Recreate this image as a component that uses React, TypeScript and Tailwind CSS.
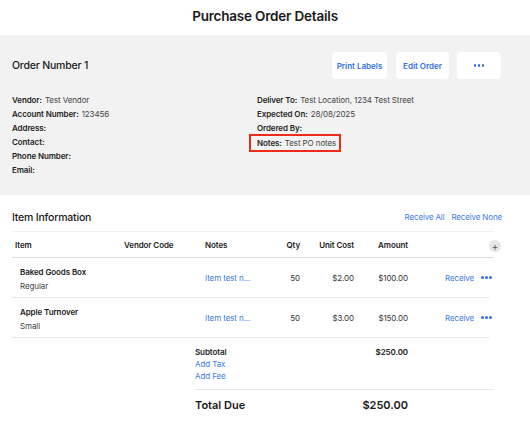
import React from "react";

const font = { fontFamily: "Inter, 'Noto Sans', sans-serif" };

const leftDetails: [string, string][] = [
  ["Vendor:", "Test Vendor"],
  ["Account Number:", "123456"],
  ["Address:", ""],
  ["Contact:", ""],
  ["Phone Number:", ""],
  ["Email:", ""],
];

const rightDetails: [string, string][] = [
  ["Deliver To:", "Test Location, 1234 Test Street"],
  ["Expected On:", "28/08/2025"],
  ["Ordered By:", ""],
];

const items = [
  { name: "Baked Goods Box", variant: "Regular", qty: 50, cost: "$2.00", amount: "$100.00" },
  { name: "Apple Turnover", variant: "Small", qty: 50, cost: "$3.00", amount: "$150.00" },
];

const cols = "grid grid-cols-[112px_81px_65px_30px_54px_54px_1fr] items-center";

const Dots = () => (
  <span className="flex items-center gap-[1.5px]">
    <span className="w-[2.5px] h-[2.5px] rounded-full bg-[#2f6fe4]" />
    <span className="w-[2.5px] h-[2.5px] rounded-full bg-[#2f6fe4]" />
    <span className="w-[2.5px] h-[2.5px] rounded-full bg-[#2f6fe4]" />
  </span>
);

const Detail = ({ label, value }: { label: string; value: string }) => (
  <div className="h-[14px] flex items-center text-[8px] text-[#222] tracking-[-0.1px]">
    <span className="font-semibold">{label}</span>
    {value && <span className="ml-[3px] text-[#444]">{value}</span>}
  </div>
);

export default function App() {
  return (
    <div className="w-[530px] h-[430px] bg-white overflow-hidden" style={font}>
      <div className="h-[35px] flex items-center justify-center pb-[2px]">
        <h1 className="text-[13.5px] font-semibold text-[#1a1a1a] tracking-[-0.2px]">Purchase Order Details</h1>
      </div>

      <div className="h-[160px] bg-[#f2f2f2] px-3">
        <div className="flex items-center justify-between pt-[17px] pr-[17px]">
          <div className="text-[10.5px] font-medium text-[#1a1a1a] tracking-[-0.2px]">Order Number 1</div>
          <div className="flex gap-[10px] text-[8px] font-semibold text-[#2f6fe4]">
            <button className="h-[27px] w-[55px] bg-white rounded-[4px]">Print Labels</button>
            <button className="h-[27px] w-[53px] bg-white rounded-[4px] -ml-[1px]">Edit Order</button>
            <button className="h-[27px] w-[44px] bg-white rounded-[4px] -ml-[2px] flex items-center justify-center">
              <Dots />
            </button>
          </div>
        </div>
        <div className="grid grid-cols-[245px_1fr] mt-[14px]">
          <div>
            {leftDetails.map(([l, v]) => (
              <Detail key={l} label={l} value={v} />
            ))}
          </div>
          <div>
            {rightDetails.map(([l, v]) => (
              <Detail key={l} label={l} value={v} />
            ))}
            <div className="h-[14px] flex items-center">
              <div className="-ml-[8px] mt-[1px] border-2 border-[#ee2a1b] h-[18px] pl-[6px] pr-[3px] flex items-center text-[8px] text-[#222] tracking-[-0.1px]">
                <span className="font-semibold">Notes:</span>
                <span className="ml-[3px] text-[#444]">Test PO notes</span>
              </div>
            </div>
          </div>
        </div>
      </div>

      <div className="px-3">
        <div className="flex items-center justify-between h-[28px] pt-[18px] mr-[16px]">
          <div className="text-[10.5px] font-medium text-[#1a1a1a] tracking-[-0.2px]">Item Information</div>
          <div className="flex gap-[7px] text-[8px] text-[#3d7be6] -mt-[2px] tracking-[-0.15px]">
            <span>Receive All</span>
            <span>Receive None</span>
          </div>
        </div>
        <div className="h-[9px] border-b border-[#f0f0f0] mr-[24px]" />

        <div className={`${cols} h-[26px] border-b border-[#dcdcdc] text-[8px] font-semibold text-[#222] mr-[24px] tracking-[-0.1px]`}>
          <div className="pl-[3px]">Item</div>
          <div>Vendor Code</div>
          <div>Notes</div>
          <div className="text-right">Qty</div>
          <div className="text-right">Unit Cost</div>
          <div className="text-right">Amount</div>
          <div className="flex justify-end -mr-[7px] pt-[2px]">
            <span className="w-[12px] h-[12px] rounded-full bg-[#e6e6e6] flex items-center justify-center text-[#555] text-[10px] leading-none font-normal">+</span>
          </div>
        </div>

        {items.map((it) => (
          <div key={it.name} className={`${cols} h-[40px] border-b border-[#e8e8e8] text-[8px] text-[#333] mr-[28px] tracking-[-0.1px]`}>
            <div className="pl-[8px] pt-[2px]">
              <div className="font-semibold text-[#1a1a1a]">{it.name}</div>
              <div className="mt-[2px] text-[#444]">{it.variant}</div>
            </div>
            <div />
            <div className="text-[#3d7be6]">Item test n...</div>
            <div className="text-right">{it.qty}</div>
            <div className="text-right">{it.cost}</div>
            <div className="text-right">{it.amount}</div>
            <div className="pl-[37px] flex items-center gap-[7px] text-[#3d7be6]">
              <span>Receive</span>
              <Dots />
            </div>
          </div>
        ))}

        <div className="ml-[183px] mr-[24px]">
          <div className="pt-[8px] pb-[7px] border-b border-[#e8e8e8] text-[8px] tracking-[-0.1px]">
            <div className="flex h-[12px] items-center">
              <span className="font-semibold text-[#222]">Subtotal</span>
              <span className="ml-auto mr-[86px] font-semibold text-[#222]">$250.00</span>
            </div>
            <div className="h-[12px] flex items-center text-[#3d7be6]">Add Tax</div>
            <div className="h-[12px] flex items-center text-[#3d7be6]">Add Fee</div>
          </div>
          <div className="flex items-center h-[30px] text-[11px] font-semibold text-[#1a1a1a]">
            <span>Total Due</span>
            <span className="ml-auto mr-[86px]">$250.00</span>
          </div>
        </div>
      </div>
    </div>
  );
}
